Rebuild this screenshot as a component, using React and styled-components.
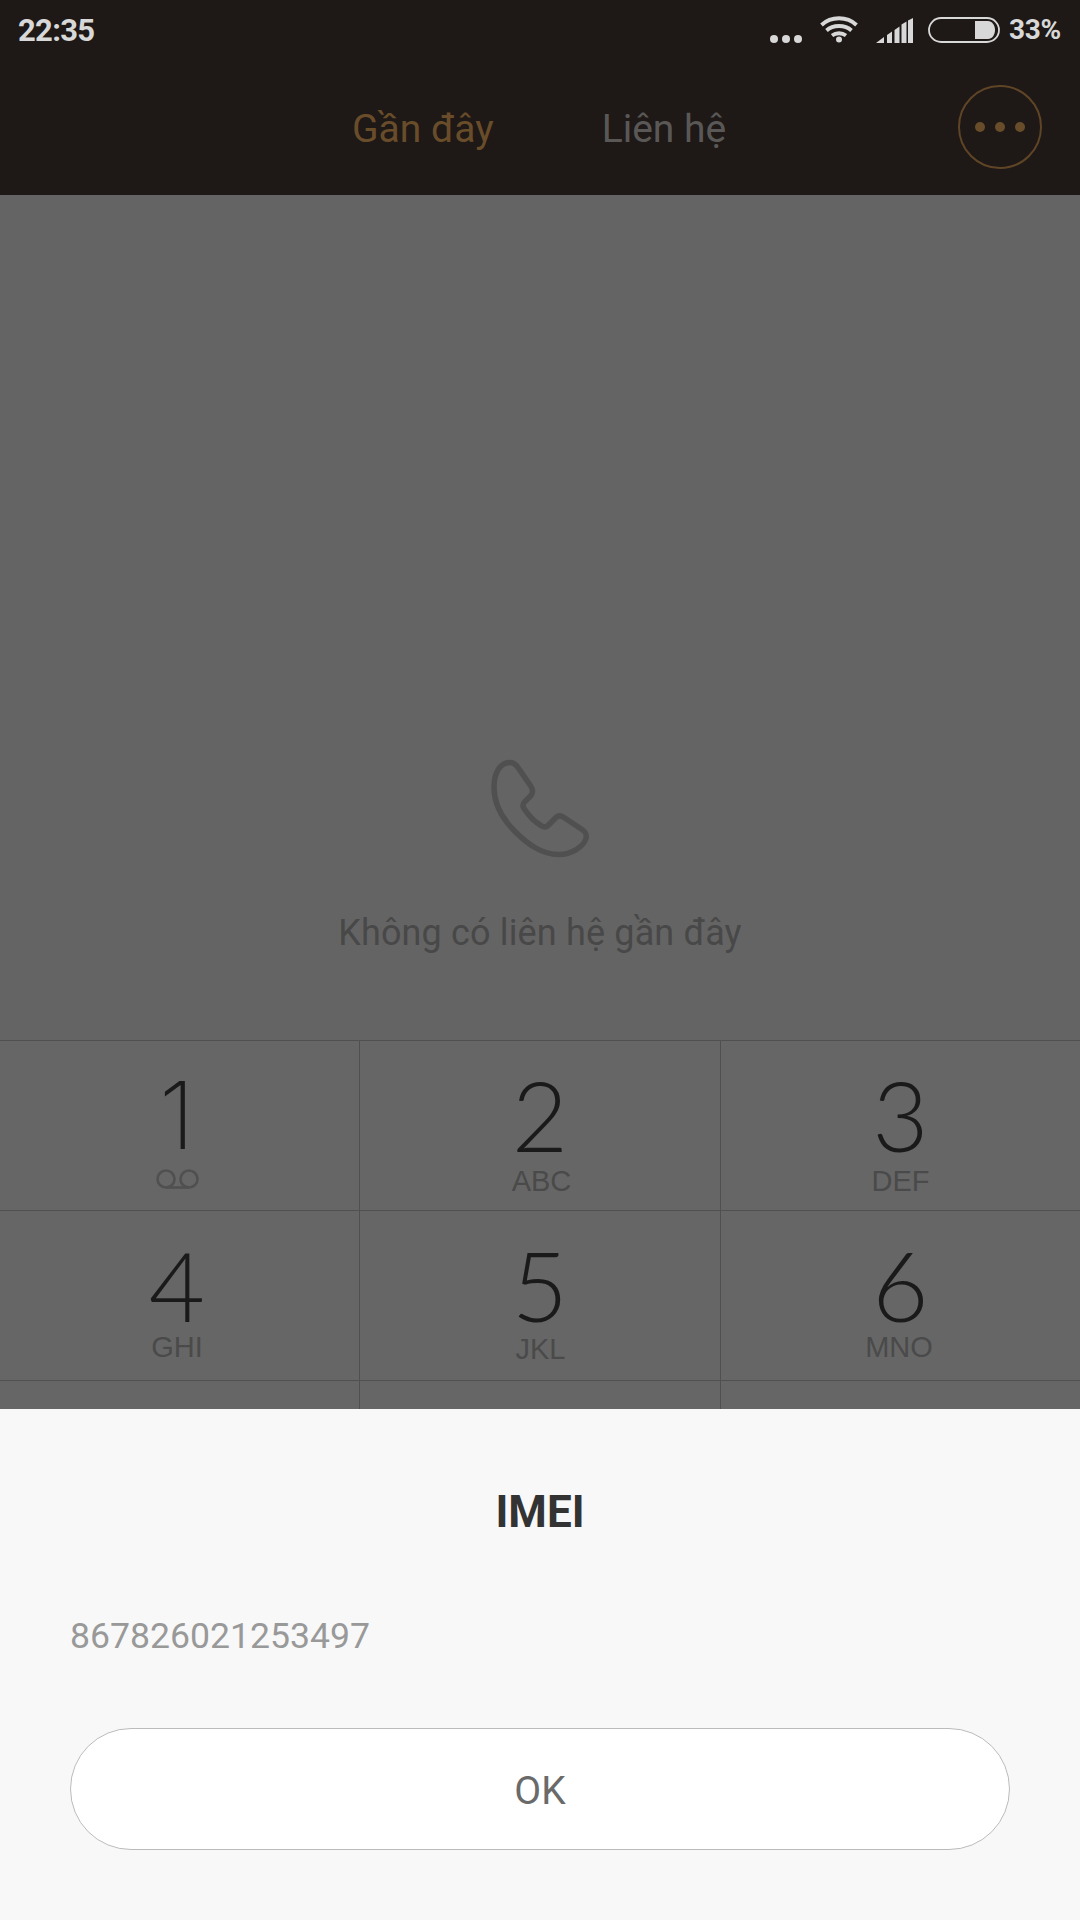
import React from 'react';
import styled, { createGlobalStyle } from 'styled-components';

const GlobalStyle = createGlobalStyle`
  html, body {
    margin: 0;
    padding: 0;
    background: #646464;
  }
  * {
    box-sizing: border-box;
  }
`;

const Screen = styled.div`
  width: 1080px;
  height: 1920px;
  display: flex;
  flex-direction: column;
  overflow: hidden;
  font-family: Roboto, "Noto Sans", sans-serif;
  background: #646464;
`;

const Header = styled.header`
  height: 195px;
  flex: none;
  background: #1e1816;
`;

const StatusBar = styled.div`
  height: 62px;
  display: flex;
  align-items: flex-start;
  justify-content: space-between;
  padding: 12px 19px 0 18px;
  color: #d8d8d8;
  font-weight: 500;
`;

const Clock = styled.span`
  font-size: 31px;
  line-height: 38px;
  font-weight: 700;
  letter-spacing: -0.7px;
`;

const StatusIcons = styled.div`
  display: flex;
  align-items: flex-start;
`;

const StatusIcon = styled.svg`
  display: block;
  flex: none;
  margin-top: ${(p) => p.$top}px;
  margin-right: ${(p) => p.$right}px;
`;

const BatteryText = styled.span`
  font-size: 28px;
  line-height: 36px;
  font-weight: 700;
  letter-spacing: -0.3px;
`;

const TabBar = styled.nav`
  height: 133px;
  display: flex;
  align-items: flex-start;
  padding: 23px 38px 0 352px;
`;

const Tab = styled.span`
  font-size: 39px;
  line-height: 88px;
  margin-right: 108px;
  color: ${(p) => (p.$active ? '#694d2a' : '#5a5857')};
`;

const MoreButton = styled.div`
  width: 84px;
  height: 84px;
  margin-left: auto;
  border: 2px solid #5f4526;
  border-radius: 50%;
  display: flex;
  align-items: center;
  justify-content: center;
  gap: 10px;
`;

const MoreDot = styled.i`
  width: 10px;
  height: 10px;
  border-radius: 50%;
  background: #694d2a;
`;

const Empty = styled.section`
  flex: 1;
  display: flex;
  flex-direction: column;
  align-items: center;
  padding-top: 564px;
`;

const PhoneIcon = styled.svg`
  display: block;
`;

const EmptyText = styled.p`
  margin: 50px 0 0;
  font-size: 36px;
  line-height: 50px;
  letter-spacing: 0.15px;
  color: #484848;
`;

const Keypad = styled.section`
  height: 369px;
  flex: none;
  display: grid;
  grid-template-columns: 360px 361px 359px;
  grid-auto-rows: 170px;
  background: #666666;
  border-top: 1px solid #505050;
`;

const Key = styled.div`
  display: flex;
  flex-direction: column;
  align-items: center;
  border-bottom: 1px solid #505050;
  border-right: 1px solid #505050;
  &:nth-child(3n) {
    border-right: 0;
  }
  &:nth-child(3n + 1) {
    padding-right: 5px;
  }
`;

// Lato's 1 has a foot serif the dialer font lacks, so that key uses Inter
const Digit = styled.span`
  margin-top: 24px;
  font-family: ${(p) => (p.$plain ? 'Inter' : 'Lato')}, sans-serif;
  font-weight: ${(p) => (p.$plain ? 200 : 300)};
  font-size: ${(p) => (p.$plain ? 94 : 97)}px;
  line-height: 100px;
  color: #1a1a1a;
`;

const Letters = styled.span`
  margin-top: ${(p) => p.$lift}px;
  margin-left: ${(p) => p.$nudge}px;
  font-family: "Liberation Sans", Arial, sans-serif;
  font-size: 29px;
  line-height: 32px;
  color: #4a4a4a;
`;

const VoicemailIcon = styled.svg`
  display: block;
  margin-top: 4px;
`;

const Dialog = styled.section`
  height: 511px;
  flex: none;
  display: flex;
  flex-direction: column;
  padding: 0 70px;
  background: #f8f8f8;
`;

const DialogTitle = styled.h2`
  margin: 73px 0 0;
  font-size: 44px;
  line-height: 60px;
  font-weight: 700;
  text-align: center;
  color: #333333;
`;

const DialogBody = styled.p`
  margin: 72px 0 0;
  font-size: 35.6px;
  line-height: 44px;
  color: #999999;
`;

const OkButton = styled.button`
  height: 122px;
  margin-top: 70px;
  width: 940px;
  padding: 3px 0 0;
  border: 1.5px solid #bbbbbb;
  border-radius: 61px;
  background: #ffffff;
  font-family: inherit;
  font-size: 39px;
  color: #6a6a6a;
`;

const KEYS = [
  { digit: '1', voicemail: true, plain: true },
  { digit: '2', letters: 'ABC', lift: 0, nudge: 3 },
  { digit: '3', letters: 'DEF', lift: 0, nudge: 0 },
  { digit: '4', letters: 'GHI', lift: -4, nudge: 0 },
  { digit: '5', letters: 'JKL', lift: -2, nudge: 1 },
  { digit: '6', letters: 'MNO', lift: -4, nudge: -3 },
  {},
  {},
  {}
];

const SIGNAL_BARS = [
  '0,25 8,19 8,25',
  '11,17 16,13.5 16,25 11,25',
  '18.5,12 23.5,8.5 23.5,25 18.5,25',
  '25.5,6.5 30.5,3.5 30.5,25 25.5,25',
  '32,2.5 37,0 37,25 32,25'
];

const App = () => (
  <Screen>
    <GlobalStyle />
    <Header>
      <StatusBar>
        <Clock>22:35</Clock>
        <StatusIcons>
          <StatusIcon $top={23} $right={18} width="32" height="8" viewBox="0 0 32 8" fill="#d8d8d8">
            <circle cx="4" cy="4" r="4" />
            <circle cx="16" cy="4" r="4" />
            <circle cx="28" cy="4" r="4" />
          </StatusIcon>
          <StatusIcon $top={3} $right={18} width="38" height="28" viewBox="0 0 38 28" fill="none" stroke="#d8d8d8" strokeWidth="3.8">
            <path d="M1.5 10 C11 1 27 1 36.5 10" />
            <path d="M6.5 15.5 C13 9.5 25 9.5 31.5 15.5" />
            <path d="M12 20.5 C16 17.5 22 17.5 26 20.5" />
            <circle cx="19" cy="24.5" r="3" fill="#d8d8d8" stroke="none" />
          </StatusIcon>
          <StatusIcon $top={6} $right={15} width="37" height="25" viewBox="0 0 37 25" fill="#d8d8d8">
            {SIGNAL_BARS.map((points) => <polygon key={points} points={points} />)}
          </StatusIcon>
          <StatusIcon $top={5} $right={9} width="72" height="26" viewBox="0 0 72 26">
            <rect x="1" y="1" width="70" height="24" rx="12" fill="none" stroke="#d8d8d8" strokeWidth="1.8" />
            <path d="M47 4 H60 C64 4 67 8 67 13 C67 18 64 22 60 22 H47 Z" fill="#d8d8d8" />
          </StatusIcon>
          <BatteryText>33%</BatteryText>
        </StatusIcons>
      </StatusBar>
      <TabBar>
        <Tab $active>Gần đây</Tab>
        <Tab>Liên hệ</Tab>
        <MoreButton>
          <MoreDot />
          <MoreDot />
          <MoreDot />
        </MoreButton>
      </TabBar>
    </Header>

    <Empty>
      <PhoneIcon width="98" height="99" viewBox="0 0 98 98" fill="none" stroke="#505050" strokeWidth="5.5" strokeLinejoin="round">
        <path d="M19 3 C8 3 3 15 3 28 C3 48 14 62 24 72 C36 84 50 95 68 95 C80 95 92 88 95 79 C96 74 94 72 91 70 L73 58 C70 56 67 56 65 58 L57 66 C55 68 53 68 50 66 C43 62 37 55 33 49 C31 46 32 44 34 42 L40 36 C42 33 42 30 40 27 L27 8 C25 5 22 3 19 3 Z" />
      </PhoneIcon>
      <EmptyText>Không có liên hệ gần đây</EmptyText>
    </Empty>

    <Keypad>
      {KEYS.map((key, i) => (
        <Key key={i}>
          {key.digit && <Digit $plain={key.plain}>{key.digit}</Digit>}
          {key.letters && <Letters $lift={key.lift} $nudge={key.nudge}>{key.letters}</Letters>}
          {key.voicemail && (
            <VoicemailIcon width="43" height="20" viewBox="0 0 43 20" fill="none" stroke="#505050" strokeWidth="2.6">
              <circle cx="10" cy="10" r="8.5" />
              <circle cx="33" cy="10" r="8.5" />
              <path d="M10 18.5 H33" />
            </VoicemailIcon>
          )}
        </Key>
      ))}
    </Keypad>

    <Dialog>
      <DialogTitle>IMEI</DialogTitle>
      <DialogBody>867826021253497</DialogBody>
      <OkButton>OK</OkButton>
    </Dialog>
  </Screen>
);

export default App;
